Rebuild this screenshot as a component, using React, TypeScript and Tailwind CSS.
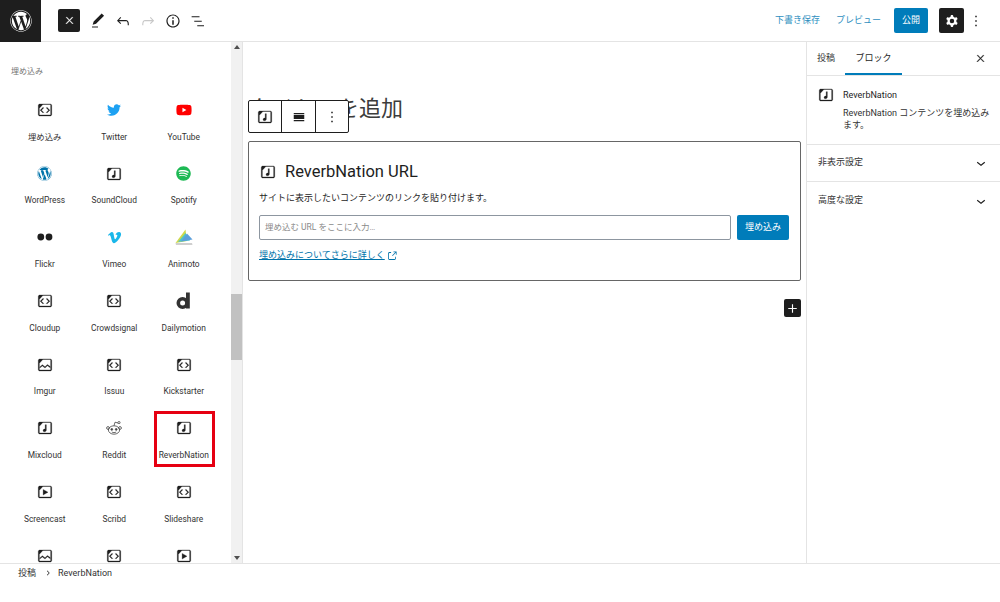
import React from "react";
import { FaTwitter, FaYoutube, FaWordpress, FaSpotify, FaVimeoV } from "react-icons/fa";

const Frame = ({ children, size = 18 }: { children?: React.ReactNode; size?: number }) => (
  <svg viewBox="0 0 24 24" width={size} height={size} fill="#1e1e1e" stroke="#1e1e1e" strokeWidth="0.35">
    <path d="M19 4H5c-1.1 0-2 .9-2 2v12c0 1.1.9 2 2 2h14c1.1 0 2-.9 2-2V6c0-1.1-.9-2-2-2zm.5 14c0 .3-.2.5-.5.5H5c-.3 0-.5-.2-.5-.5V9.8l4.7-5.3H19c.3 0 .5.2.5.5v13z" />
    {children}
  </svg>
);
const Code = () => (
  <Frame>
    <path d="M10.3 9.2l-3 3 3 3-.9.9-3.9-3.9 3.9-3.9zM13.7 9.2l3 3-3 3 .9.9 3.9-3.9-3.9-3.9z" />
  </Frame>
);
const Play = () => (
  <Frame>
    <path d="M9.5 8.5l6.5 3.8-6.5 3.8z" />
  </Frame>
);
const Music = ({ size = 18 }: { size?: number }) => (
  <Frame size={size}>
    <path d="M12.2 7.5h1.6v7.3c0 1.3-1 2.2-2.4 2.2-1.2 0-2-.7-2-1.7 0-1.1 1-1.9 2.3-1.9.2 0 .4 0 .5.1z" />
  </Frame>
);
const Photo = () => (
  <Frame>
    <path d="M5 14.5l3.5-3 3.5 2.8 3.2-3 3.8 2.8v1.6l-3.8-2.6-3.2 3-3.5-2.8L5 16z" />
  </Frame>
);
const Flickr = () => (
  <svg viewBox="0 0 18 18" width="18" height="18" fill="#1e1e1e">
    <circle cx="4.8" cy="9" r="3.4" />
    <circle cx="13" cy="9" r="3.4" />
  </svg>
);
const Animoto = () => (
  <svg viewBox="0 0 18 18" width="18" height="18">
    <polygon points="0.5,15 10.5,1.5 12,13" fill="#cfd94a" />
    <polygon points="3,14 10.5,5 15,12.5" fill="#4fc3c9" />
    <polygon points="6,13.5 12,5.5 17.5,11.5" fill="#5b9fdc" />
    <polygon points="0.5,15 17,15 17.5,17 1,17" fill="#cfcfcf" />
  </svg>
);
const Dailymotion = () => (
  <svg viewBox="0 0 18 18" width="18" height="18" fill="none">
    <circle cx="7.6" cy="11" r="4.3" stroke="#333" strokeWidth="3.6" />
    <rect x="11" y="0.5" width="3.8" height="16" fill="#333" />
  </svg>
);
const Reddit = () => (
  <svg viewBox="0 0 18 18" width="18" height="18" fill="none" stroke="#444" strokeWidth="0.8">
    <ellipse cx="9" cy="11" rx="5.6" ry="4.2" />
    <circle cx="3" cy="9" r="1.4" />
    <circle cx="15" cy="9" r="1.4" />
    <path d="M9 6.8l1-3.6 3 .8" />
    <circle cx="14" cy="3.6" r="1.1" />
    <circle cx="6.8" cy="10.4" r=".9" fill="#444" />
    <circle cx="11.2" cy="10.4" r=".9" fill="#444" />
    <path d="M6.8 13c1.3.8 3 .8 4.4 0" />
  </svg>
);

const items: { label: string; icon: React.ReactNode; highlight?: boolean }[] = [
  { label: "埋め込み", icon: <Code /> },
  { label: "Twitter", icon: <FaTwitter size={14} color="#1da1f2" /> },
  { label: "YouTube", icon: <FaYoutube size={16} color="#ff0000" /> },
  { label: "WordPress", icon: <FaWordpress size={15} color="#0073aa" /> },
  { label: "SoundCloud", icon: <Music /> },
  { label: "Spotify", icon: <FaSpotify size={15} color="#1db954" /> },
  { label: "Flickr", icon: <Flickr /> },
  { label: "Vimeo", icon: <FaVimeoV size={15} color="#1ab7ea" /> },
  { label: "Animoto", icon: <Animoto /> },
  { label: "Cloudup", icon: <Code /> },
  { label: "Crowdsignal", icon: <Code /> },
  { label: "Dailymotion", icon: <Dailymotion /> },
  { label: "Imgur", icon: <Photo /> },
  { label: "Issuu", icon: <Code /> },
  { label: "Kickstarter", icon: <Code /> },
  { label: "Mixcloud", icon: <Music /> },
  { label: "Reddit", icon: <Reddit /> },
  { label: "ReverbNation", icon: <Music />, highlight: true },
  { label: "Screencast", icon: <Play /> },
  { label: "Scribd", icon: <Code /> },
  { label: "Slideshare", icon: <Code /> },
  { label: "", icon: <Photo /> },
  { label: "", icon: <Code /> },
  { label: "", icon: <Play /> },
];

const G = ({ d, size = 18, fill = "#1e1e1e", stroke = 0 }: { d: string; size?: number; fill?: string; stroke?: number }) => (
  <svg viewBox="0 0 24 24" width={size} height={size} fill={fill} fillRule="evenodd" stroke={stroke ? fill : "none"} strokeWidth={stroke}>
    <path d={d} />
  </svg>
);
const CLOSE = "M13 11.8l6.1-6.3-1-1-6.1 6.2-6.1-6.3-1 1 6.1 6.3-6.5 6.7 1 1 6.5-6.6 6.5 6.6 1-1z";
const CHEVRON = "M17.5 11.6L12 16l-5.5-4.4.9-1.2L12 14l4.5-3.6 1 1.2z";
const DOTS = "M13 19h-2v-2h2v2zm0-6h-2v-2h2v2zm0-6h-2V5h2v2z";
const COG =
  "M10.289 4.836A1 1 0 0111.275 4h1.306a1 1 0 01.987.836l.244 1.466c.787.26 1.503.679 2.108 1.218l1.393-.522a1 1 0 011.216.437l.653 1.13a1 1 0 01-.23 1.273l-1.148.944a6.025 6.025 0 010 2.435l1.149.946a1 1 0 01.23 1.272l-.653 1.13a1 1 0 01-1.216.437l-1.394-.522c-.605.54-1.32.958-2.108 1.218l-.244 1.466a1 1 0 01-.987.836h-1.306a1 1 0 01-.986-.836l-.244-1.466a5.995 5.995 0 01-2.108-1.218l-1.394.522a1 1 0 01-1.217-.436l-.653-1.131a1 1 0 01.23-1.272l1.149-.946a6.026 6.026 0 010-2.435l-1.148-.944a1 1 0 01-.23-1.272l.653-1.131a1 1 0 011.217-.437l1.393.522a5.994 5.994 0 012.108-1.218l.244-1.466zM14.929 12a3 3 0 11-6 0 3 3 0 016 0z";

export default function App() {
  return (
    <div className="flex h-[602px] w-[1000px] flex-col overflow-hidden bg-white font-['Roboto','Noto_Sans_CJK_JP',sans-serif] text-[9px] text-[#1e1e1e]">
      {/* Top bar */}
      <header className="flex h-[42px] shrink-0 items-center border-b border-[#e4e4e4]">
        <div className="flex h-[42px] w-[41px] items-center justify-center bg-[#1e1e1e]">
          <FaWordpress size={22} color="#fff" />
        </div>
        <div className="ml-[17px] flex h-[23px] w-[22px] items-center justify-center rounded-[2px] bg-[#1e1e1e]">
          <G d={CLOSE} size={11} fill="#fff" stroke={1} />
        </div>
        <div className="ml-[9px] flex items-center gap-[7px]">
          <G d="M20.1 5.1L16.9 2 6.2 12.7l-1.3 4.4 4.5-1.3L20.1 5.1zM4 20.8h8v-1.5H4v1.5z" />
          <G d="M18.3 11.7c-.6-.6-1.4-.9-2.3-.9H6.7l2.9-3.3-1.1-1-4.5 5L8.5 16l1-1-2.7-2.7H16c.5 0 .9.2 1.3.5 1 1 1 3.4 1 4.5v.3h1.5v-.2c0-1.5 0-4.3-1.5-5.7z" />
          <G d="M15.6 6.5l-1.1 1 2.9 3.3H8c-.9 0-1.7.3-2.3.9-1.4 1.5-1.4 4.2-1.4 5.6v.2h1.5v-.3c0-1.1 0-3.5 1-4.5.3-.3.7-.5 1.3-.5h9.2L14.5 15l1.1 1.1 4.6-4.6-4.6-5z" fill="#c8c8c8" />
          <G d="M12 3.2c-4.8 0-8.8 3.9-8.8 8.8 0 4.8 3.9 8.8 8.8 8.8 4.8 0 8.8-3.9 8.8-8.8 0-4.8-4-8.8-8.8-8.8zm0 16c-4 0-7.2-3.3-7.2-7.2C4.8 8 8 4.8 12 4.8s7.2 3.3 7.2 7.2c0 4-3.2 7.2-7.2 7.2zM11 17h2v-6h-2v6zm0-8h2V7h-2v2z" />
          <G d="M3.5 5.5H14V7H3.5zM7 11.5h10V13H7zM11 17.5h9V19h-9z" />
        </div>
        <div className="ml-auto flex items-center">
          <span className="text-[#2f8fc0]">下書き保存</span>
          <span className="ml-[16px] text-[#2f8fc0]">プレビュー</span>
          <div className="ml-[13px] flex h-[25px] w-[34px] items-center justify-center rounded-[2px] bg-[#007cba] text-white">公開</div>
          <div className="ml-[11px] flex h-[25px] w-[25px] items-center justify-center rounded-[2px] bg-[#1e1e1e]">
            <G d={COG} size={18} fill="#fff" />
          </div>
          <div className="ml-[3px] mr-[15px]">
            <G d={DOTS} size={18} />
          </div>
        </div>
      </header>

      <div className="flex min-h-0 flex-1">
        {/* Inserter */}
        <aside className="flex w-[243px] shrink-0 border-r border-[#e4e4e4]">
          <div className="min-w-0 flex-1 overflow-hidden pl-[10px]">
            <div className="ml-px mt-[23px] text-[8px] leading-[14px] text-[#757575]">埋め込み</div>
            <div className="mt-[22px] grid grid-cols-[69.5px_69.5px_69.5px] auto-rows-[63.7px]">
              {items.map((it, i) => (
                <div key={i} className="relative flex flex-col items-center">
                  <div className="flex h-[18px] w-[18px] items-center justify-center">{it.icon}</div>
                  <div className="mt-[10.5px] whitespace-nowrap text-[8.4px] leading-[14px] text-[#333]">{it.label}</div>
                  {it.highlight && <div className="absolute left-[5px] top-[-8px] h-[56px] w-[61px] border-[3px] border-[#e60012]" />}
                </div>
              ))}
            </div>
          </div>
          <div className="flex w-[11px] shrink-0 flex-col items-center bg-[#f1f1f1]">
            <div className="mt-[3px] h-0 w-0 border-x-[3px] border-b-[4px] border-x-transparent border-b-[#505050]" />
            <div className="mt-[245px] h-[66px] w-full bg-[#c1c1c1]" />
            <div className="mb-[3px] mt-auto h-0 w-0 border-x-[3px] border-t-[4px] border-x-transparent border-t-[#505050]" />
          </div>
        </aside>

        {/* Editor */}
        <main className="relative w-[563px] shrink-0 pl-[5px] pr-[5px]">
          <h1 className="ml-px mt-[52px] font-['Liberation_Serif','Noto_Sans_CJK_JP',serif] text-[22px] font-normal leading-[30px] text-[#3c3c3c]">タイトルを追加</h1>
          <div className="absolute left-[5px] top-[58px] flex h-[33px] w-[101px] items-stretch rounded-[2px] border border-[#1e1e1e] bg-white">
            <div className="flex w-[33px] items-center justify-center border-r border-[#1e1e1e]">
              <Music />
            </div>
            <div className="flex w-[34px] items-center justify-center border-r border-[#1e1e1e]">
              <G d="M5 16h14v1.5H5zM5 9h14v5.5H5zM5 6.5h14V8H5z" />
            </div>
            <div className="flex flex-1 items-center justify-center">
              <G d={DOTS} />
            </div>
          </div>
          <section className="mt-[17px] h-[140px] rounded-[2px] border border-[#666] pl-[10px] pr-[11px] pt-[19px]">
            <div className="flex h-[22px] items-center">
              <Music />
              <span className="ml-[8px] text-[16.5px] leading-[22px]">ReverbNation URL</span>
            </div>
            <p className="mt-[8px] text-[9px] leading-[14px]">サイトに表示したいコンテンツのリンクを貼り付けます。</p>
            <div className="mt-[10px] flex h-[25px] gap-[6px]">
              <div className="flex flex-1 items-center rounded-[2px] border border-[#8d96a0] px-[5px] text-[8.5px] text-[#8a8a8a]">埋め込む URL をここに入力…</div>
              <div className="flex w-[52px] items-center justify-center rounded-[2px] bg-[#007cba] text-white">埋め込み</div>
            </div>
            <div className="mt-[9px] flex items-center text-[#0073aa]">
              <span className="underline">埋め込みについてさらに詳しく</span>
              <svg viewBox="0 0 24 24" width="12" height="12" className="ml-px" fill="#0073aa">
                <path d="M18.2 17c0 .7-.6 1.2-1.2 1.2H7c-.7 0-1.2-.6-1.2-1.2V7c0-.7.6-1.2 1.2-1.2h3.2V4.2H7C5.5 4.2 4.2 5.5 4.2 7v10c0 1.5 1.2 2.8 2.8 2.8h10c1.5 0 2.8-1.2 2.8-2.8v-3.6h-1.5V17zM14.9 3v1.5h3.7l-6.4 6.4 1.1 1.1 6.4-6.4v3.7h1.5V3h-6.8z" />
              </svg>
            </div>
          </section>
          <div className="mt-[18px] flex justify-end">
            <div className="flex h-[18px] w-[17px] items-center justify-center rounded-[2px] bg-[#1e1e1e]">
              <G d="M18 11.2h-5.2V6h-1.6v5.2H6v1.6h5.2V18h1.6v-5.2H18z" size={17} fill="#fff" />
            </div>
          </div>
        </main>

        {/* Settings */}
        <aside className="flex-1 border-l border-[#e4e4e4]">
          <div className="flex h-[34px] items-stretch border-b border-[#e4e4e4] pl-[10px]">
            <div className="flex items-center text-[#333]">投稿</div>
            <div className="ml-[10px] flex w-[57px] items-center justify-center border-b-[2px] border-[#007cba] pt-[2px]">ブロック</div>
            <div className="ml-auto mr-[14px] flex items-center">
              <G d={CLOSE} size={11} stroke={1} />
            </div>
          </div>
          <div className="flex h-[69px] border-b border-[#e4e4e4] pl-[10px] pt-[10px]">
            <Music />
            <div className="ml-[8px] w-[148px] leading-[12.5px]">
              <div className="mt-[3px]">ReverbNation</div>
              <div className="mt-[5px] text-[#333]">ReverbNation コンテンツを埋め込みます。</div>
            </div>
          </div>
          <div className="flex h-[37px] items-center justify-between border-b border-[#e4e4e4] pl-[11px] pr-[10px] text-[#333]">
            非表示設定
            <G d={CHEVRON} />
          </div>
          <div className="flex h-[37px] items-center justify-between pl-[11px] pr-[10px] text-[#333]">
            高度な設定
            <G d={CHEVRON} />
          </div>
        </aside>
      </div>

      {/* Breadcrumb */}
      <footer className="flex h-[39px] shrink-0 items-start border-t border-[#e4e4e4] pl-[18px] pt-[2px] leading-[14px] text-[#333]">
        <span>投稿</span>
        <svg viewBox="0 0 24 24" width="10" height="14" className="ml-[7px]" fill="#1e1e1e"><path d="M10.6 6L9.4 7l4.6 5-4.6 5 1.2 1 5.4-6z" /></svg>
        <span className="ml-[5px]">ReverbNation</span>
      </footer>
    </div>
  );
}
